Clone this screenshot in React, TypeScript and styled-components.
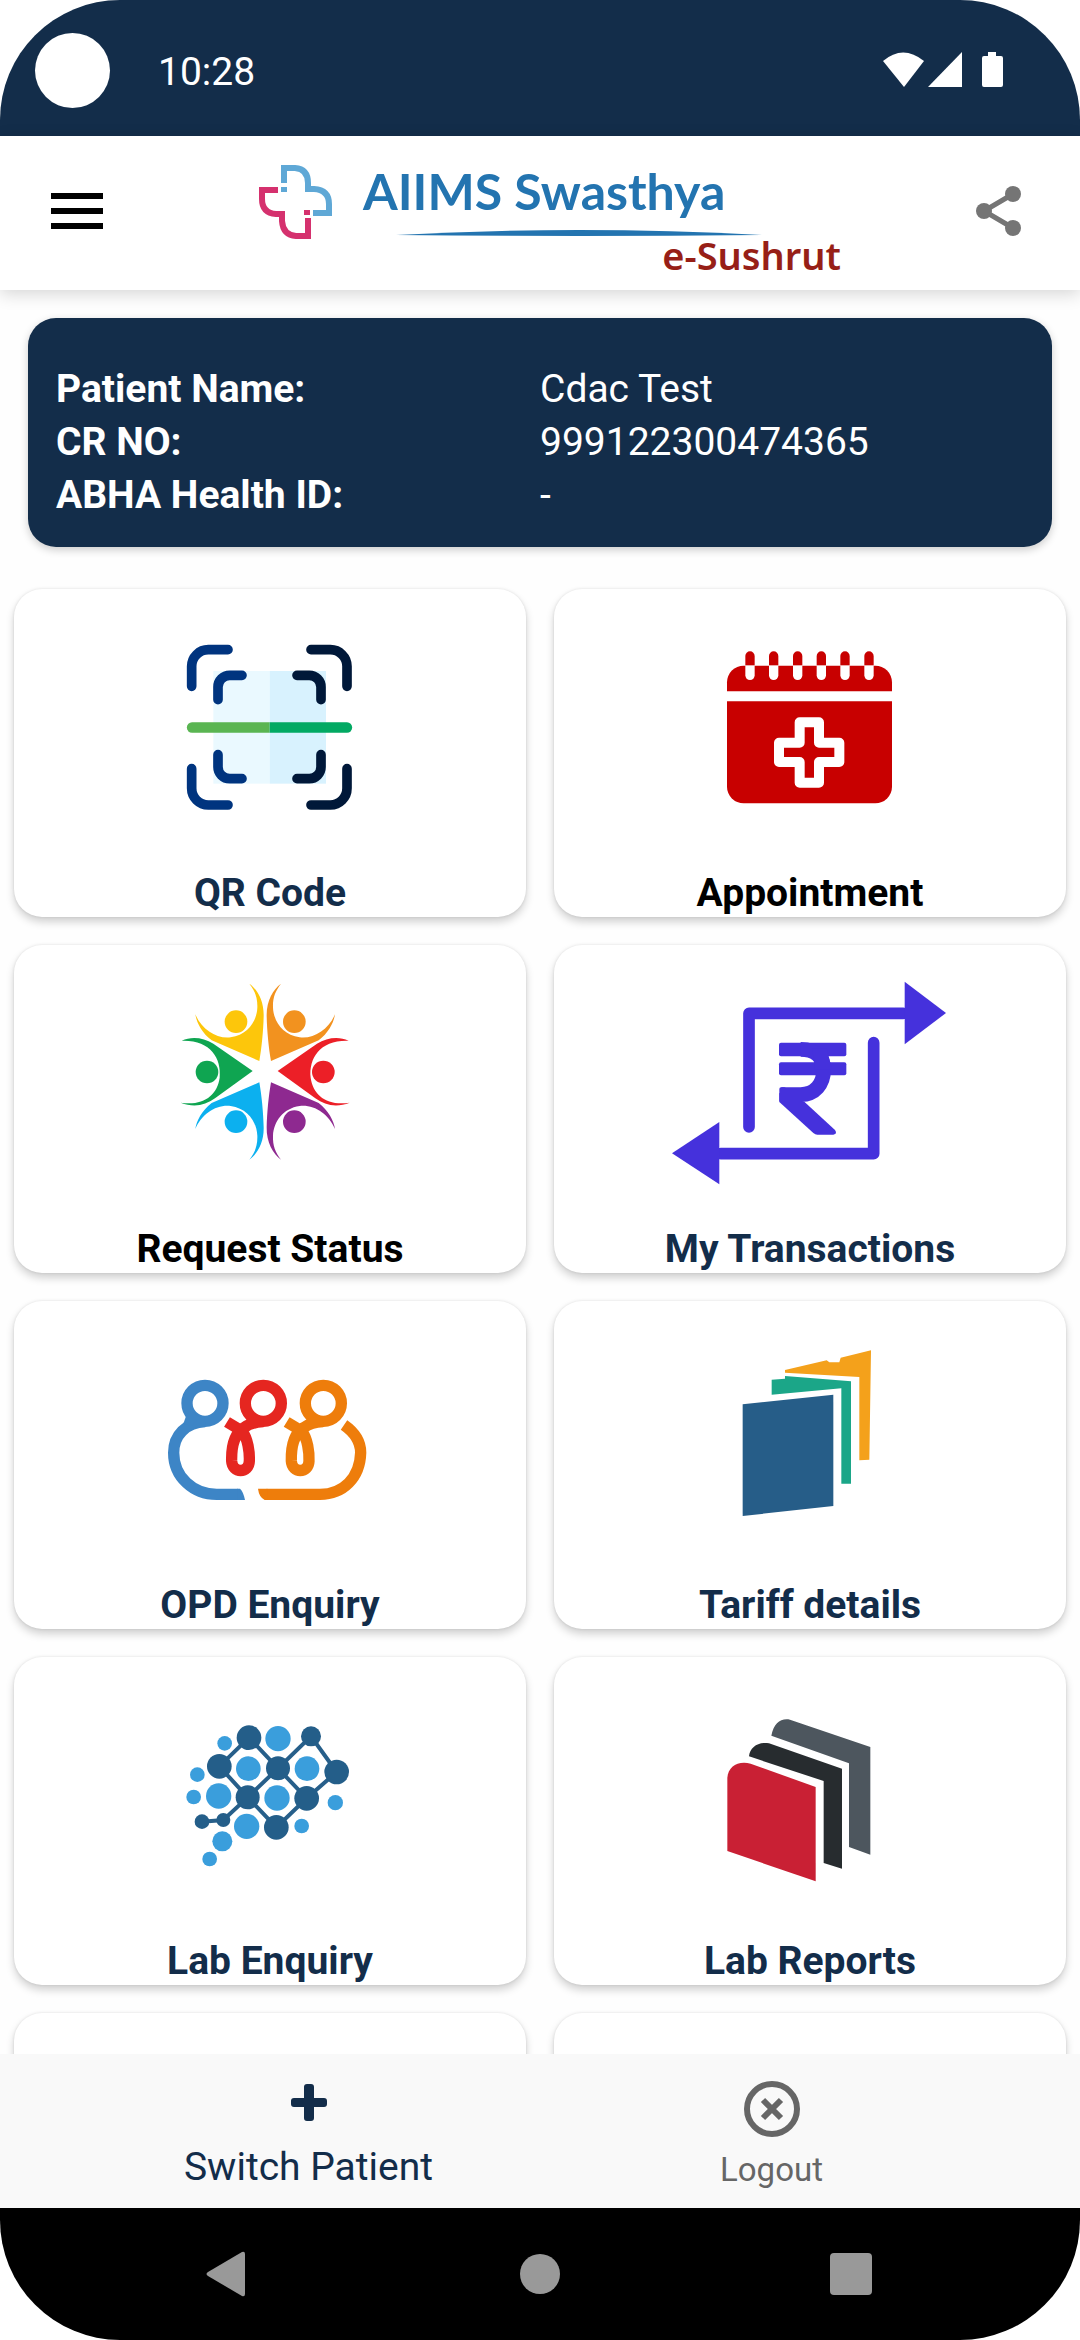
import type { ReactNode } from "react";
import styled, { createGlobalStyle } from "styled-components";

const NAVY = "#132d4a";

const GlobalStyle = createGlobalStyle`
  * {
    box-sizing: border-box;
  }
  body {
    margin: 0;
    background-color: #ffffff;
    font-family: Roboto, sans-serif;
  }
  button {
    padding: 0;
    border: none;
    background: none;
    font-family: inherit;
    cursor: pointer;
  }
  svg {
    display: block;
    flex-shrink: 0;
  }
`;

const Screen = styled.div`
  display: flex;
  flex-direction: column;
  height: 100vh;
  overflow: hidden;
  border-radius: 120px;
  background-color: #fefefe;
`;

const StatusBar = styled.div`
  display: flex;
  align-items: center;
  flex-shrink: 0;
  height: 136px;
  padding: 4px 77px 0 35px;
  background-color: ${NAVY};
  color: #ffffff;
`;

const Camera = styled.div`
  width: 75px;
  height: 75px;
  margin-right: 48px;
  border-radius: 50%;
  background-color: #ffffff;
`;

const Clock = styled.time`
  flex: 1;
  padding-top: 4px;
  font-size: 39px;
  line-height: 46px;
`;

const Header = styled.header`
  position: relative;
  display: flex;
  align-items: center;
  justify-content: space-between;
  flex-shrink: 0;
  height: 154px;
  padding: 0 59px 4px 51px;
  background-color: #ffffff;
  box-shadow: 0 4px 16px rgba(0, 0, 0, 0.16);
`;

const MenuButton = styled.button`
  width: 72px;
`;

const Logo = styled.div`
  display: flex;
  align-items: flex-start;
  gap: 30px;
  padding-top: 16px;
`;

const Wordmark = styled.div`
  display: flex;
  flex-direction: column;
  width: 478px;

  svg {
    margin: 12px 0 0 33px;
  }
`;

const BrandName = styled.span`
  color: #2374b0;
  font-family: Lato, sans-serif;
  font-size: 50px;
  font-weight: 700;
  line-height: 54px;
  white-space: nowrap;
`;

const BrandSub = styled.span`
  align-self: flex-end;
  color: #971f17;
  font-family: "Noto Sans", sans-serif;
  font-size: 38px;
  font-weight: 600;
  line-height: 38px;
`;

const Main = styled.main`
  flex: 1;
  min-height: 0;
  overflow: hidden;
  padding-top: 28px;
`;

const PatientCard = styled.dl`
  display: grid;
  grid-template-columns: 1fr 1fr;
  margin: 0 28px 42px;
  padding: 45px 28px 25px;
  border-radius: 28px;
  background-color: ${NAVY};
  box-shadow: 0 3px 8px rgba(0, 0, 0, 0.2);
  color: #ffffff;
  font-size: 39px;
  line-height: 53px;

  dt {
    font-weight: 700;
  }
  dd {
    margin: 0;
  }
`;

const TileGrid = styled.div`
  display: grid;
  grid-template-columns: 1fr 1fr;
  grid-auto-rows: 328px;
  gap: 28px;
  padding: 0 14px;
`;

const Tile = styled.button<{ $color?: string }>`
  display: flex;
  flex-direction: column;
  align-items: center;
  border-radius: 28px;
  background-color: #ffffff;
  box-shadow:
    0 0 3px rgba(0, 0, 0, 0.1),
    0 5px 9px rgba(0, 0, 0, 0.18);
  color: ${({ $color }) => $color ?? NAVY};
  font-size: 39px;
  font-weight: 700;
  line-height: 48px;
`;

const BottomNav = styled.nav`
  position: relative;
  display: flex;
  flex-shrink: 0;
  height: 154px;
  padding: 0 77px 18px;
  background-color: #f9f9f9;
`;

const NavItem = styled.button<{ $active?: boolean }>`
  display: flex;
  flex: 1;
  flex-direction: column;
  align-items: center;
  justify-content: flex-end;
  gap: 13px;
  color: ${({ $active }) => ($active ? NAVY : "#666666")};
  font-size: ${({ $active }) => ($active ? 39 : 33)}px;
  line-height: ${({ $active }) => ($active ? 46 : 40)}px;
`;

const SystemBar = styled.div`
  display: grid;
  grid-template-columns: repeat(3, 1fr);
  flex-shrink: 0;
  height: 132px;
  padding: 0 73px;
  background-color: #000000;

  button {
    display: flex;
    align-items: center;
    justify-content: center;
  }
`;

// every tile icon is drawn on the same 960x840 board
const TileIcon = ({ x, y, children }: { x: number; y: number; children: ReactNode }) => (
  <svg width="320" height="280" viewBox="0 0 960 840" fill="none" aria-hidden="true">
    <g transform={`translate(${x} ${y})`}>{children}</g>
  </svg>
);

const QrIcon = () => (
  <TileIcon x={150} y={96}>
    <rect x="160" y="150" width="169" height="338" fill="#eaf9ff" />
    <rect x="329" y="150" width="169" height="338" fill="#d8f2fe" />
    <g strokeWidth="29" strokeLinecap="round">
      <g stroke="#00347f">
        <path d="M95 196V136A50 50 0 0 1 145 86H204" />
        <path d="M95 443V502A50 50 0 0 0 145 552H204" />
        <path d="M174 236V198A35 35 0 0 1 209 163H246" />
        <path d="M174 401V438A35 35 0 0 0 209 473H246" />
      </g>
      <g stroke="#001839">
        <path d="M453 86H511A50 50 0 0 1 561 136V196" />
        <path d="M453 552H511A50 50 0 0 0 561 502V443" />
        <path d="M411 163H448A35 35 0 0 1 483 198V236" />
        <path d="M411 473H448A35 35 0 0 0 483 438V401" />
      </g>
    </g>
    <path d="M329 304H96a15 15 0 0 0 0 31H329Z" fill="#5ab552" />
    <path d="M329 304H561a15 15 0 0 1 0 31H329Z" fill="#02a963" />
  </TileIcon>
);

const AppointmentIcon = () => (
  <TileIcon x={150} y={96}>
    <g fill="#c80000">
      <path d="M81 211V184A50 50 0 0 1 131 134H526A50 50 0 0 1 576 184V211Z" />
      <path d="M81 241H576V497A50 50 0 0 1 526 547H131A50 50 0 0 1 81 497Z" />
    </g>
    {[150, 221, 293, 364, 435, 507].map((cx) => (
      <g key={cx}>
        <path d={`M${cx - 14} 133V105a14 14 0 0 1 28 0V133Z`} fill="#c80000" />
        <path d={`M${cx - 14} 134V163a14 14 0 0 0 28 0V134Z`} fill="#ffffff" />
      </g>
    ))}
    <path
      d="M299 304H357V365H418V423H357V485H299V423H237V365H299Z"
      stroke="#ffffff"
      strokeWidth="30"
      strokeLinejoin="round"
    />
  </TileIcon>
);

const figure =
  "M268 68C292 85 312 120 311 165C310 210 305 260 298 300L155 238C125 215 110 185 106 160C125 205 168 234 212 229C262 222 290 182 292 140C293 110 285 90 268 68Z";
const sideFigure =
  "M65 239C95 226 130 230 160 248L278 330L165 412C135 434 100 440 62 425C130 436 172 402 179 350C185 290 150 236 65 239Z";

const RequestIcon = () => (
  <TileIcon x={150} y={48}>
    <g fill="#fdc60b">
      <path d={figure} />
      <circle cx="228" cy="182" r="34" />
    </g>
    <g fill="#f2921f" transform="translate(631 0) scale(-1 1)">
      <path d={figure} />
      <circle cx="228" cy="182" r="34" />
    </g>
    <g fill="#0cb0ef" transform="translate(0 664) scale(1 -1)">
      <path d={figure} />
      <circle cx="228" cy="182" r="34" />
    </g>
    <g fill="#8e2990" transform="translate(631 664) scale(-1 -1)">
      <path d={figure} />
      <circle cx="228" cy="182" r="34" />
    </g>
    <g fill="#0fa551">
      <path d={sideFigure} />
      <circle cx="141" cy="333" r="34" />
    </g>
    <g fill="#ec1f27" transform="translate(631 0) scale(-1 1)">
      <path d={sideFigure} />
      <circle cx="141" cy="333" r="34" />
    </g>
  </TileIcon>
);

const TransactionsIcon = () => (
  <TileIcon x={0} y={48}>
    <g stroke="#4531dc" strokeWidth="35" strokeLinecap="round" strokeLinejoin="round">
      <path d="M297 498V157H760" />
      <path d="M671 245V578H212" />
    </g>
    <g fill="#4531dc">
      <path d="M764 62L888 156L764 250Z" />
      <path d="M208 483L66 577L208 670Z" />
      <rect x="387" y="245" width="202" height="41" rx="6" />
      <rect x="387" y="304" width="202" height="39" rx="6" />
      <path d="M388 396L463 422L555 507Q563 519 550 521H502Q496 521 490 516L388 423Z" />
    </g>
    <path
      d="M394 401H452C495 400 521 370 521 325C521 295 504 265 452 265"
      stroke="#4531dc"
      strokeWidth="44"
    />
    <rect x="388" y="379" width="20" height="44" rx="5" fill="#4531dc" />
    <path d="M486 262H530L546 325H495Z" fill="#4531dc" />
  </TileIcon>
);

const opdLoop =
  "M231 213L276 240C294 262 299 305 298 330C297 368 247 368 245 330C244 290 250 250 282 230C300 216 320 213 340 212";

const OpdIcon = () => (
  <TileIcon x={120} y={150}>
    <g strokeWidth="34">
      <g stroke="#3d85c6">
        <circle cx="165" cy="157" r="54" />
        <path d="M165 212C108 215 71 252 71 305C71 378 130 430 200 430H264" />
      </g>
      <g stroke="#e52620">
        <circle cx="340" cy="157" r="54" />
        <path d={opdLoop} />
      </g>
      <g stroke="#ee7d0b">
        <circle cx="520" cy="157" r="54" />
        <path d={opdLoop} transform="translate(179 0)" />
        <path d="M582 222C615 245 632 275 632 305C630 380 580 430 510 430H350" />
      </g>
    </g>
    <path d="M110 190L125 180L150 200L125 225L100 218Z" fill="#3d85c6" />
    <path d="M262 413H270Q280 422 285 447H262Z" fill="#3d85c6" />
    <path d="M352 413H324Q327 438 344 447H352Z" fill="#ee7d0b" />
  </TileIcon>
);

const TariffIcon = () => (
  <TileIcon x={150} y={90}>
    <path d="M128 220L400 191V525L128 555Z" fill="#265d88" />
    <path d="M215 146L255 143V135L453 151V458H424V172L215 191Z" fill="#1ba688" />
    <path d="M255 117L380 88L388 94H418L422 80L513 58L508 386L478 388V138L255 125Z" fill="#f4a11b" />
  </TileIcon>
);

const darkNodes = [
  [267, 110, 37], [453, 106, 30], [178, 196, 37], [354, 202, 36], [530, 213, 37],
  [263, 289, 36], [440, 292, 37], [349, 379, 37], [126, 362, 22], [190, 357, 21],
];
const lightNodes = [
  [354, 113, 38], [194, 127, 22], [265, 203, 37], [441, 203, 37], [112, 221, 22],
  [101, 288, 22], [176, 285, 38], [351, 291, 38], [526, 305, 23], [260, 376, 38],
  [425, 375, 22], [187, 421, 30], [149, 474, 22],
];

const LabEnquiryIcon = () => (
  <TileIcon x={150} y={132}>
    <path
      d="M178 196L267 110L354 202L453 106L530 213L440 292L349 379L263 289ZM440 292L354 202L263 289L190 357L126 362"
      stroke="#275f8a"
      strokeWidth="12"
    />
    {darkNodes.map(([cx, cy, r]) => (
      <circle key={`${cx}-${cy}`} cx={cx} cy={cy} r={r} fill="#245e89" />
    ))}
    {lightNodes.map(([cx, cy, r]) => (
      <circle key={`${cx}-${cy}`} cx={cx} cy={cy} r={r} fill="#3a9edc" />
    ))}
  </TileIcon>
);

const LabReportsIcon = () => (
  <TileIcon x={150} y={132}>
    <path d="M214 104C222 66 242 51 270 56L511 138V461L447 438V187Z" fill="#4d565e" />
    <path d="M147 166C150 138 175 121 207 127L426 203V503L371 486V240Z" fill="#272c2f" />
    <path d="M82 450V230C84 196 115 178 152 188L347 258V541Z" fill="#c92034" />
  </TileIcon>
);

const tiles = [
  { label: "QR Code", icon: <QrIcon /> },
  { label: "Appointment", icon: <AppointmentIcon />, color: "#000000" },
  { label: "Request Status", icon: <RequestIcon />, color: "#000000" },
  { label: "My Transactions", icon: <TransactionsIcon /> },
  { label: "OPD Enquiry", icon: <OpdIcon /> },
  { label: "Tariff details", icon: <TariffIcon /> },
  { label: "Lab Enquiry", icon: <LabEnquiryIcon /> },
  { label: "Lab Reports", icon: <LabReportsIcon /> },
];

const patient = [
  { label: "Patient Name:", value: "Cdac Test" },
  { label: "CR NO:", value: "999122300474365" },
  { label: "ABHA Health ID:", value: "-" },
];

const AppHeader = () => (
  <Header>
    <MenuButton type="button" aria-label="Menu">
      <svg width="52" height="36" viewBox="0 0 52 36">
        <path d="M0 0H52V6H0ZM0 15H52V21H0ZM0 30H52V36H0Z" fill="#000000" />
      </svg>
    </MenuButton>
    <Logo>
      <svg width="75" height="75" viewBox="18 15 75 75" fill="none" strokeWidth="6" aria-hidden="true">
        <path d="M44 34V19H55Q68 20 68 34V40H74Q89 41 89 55V64H73" stroke="#5fa8d6" />
        <path d="M41 38H47V43H41Z" fill="#5fa8d6" />
        <path d="M38 41H22V50Q22 64 36 65H42V72Q43 86 56 87H68V69" stroke="#d5316e" />
        <path d="M64 61H70V66H64Z" fill="#d5316e" />
      </svg>
      <Wordmark>
        <BrandName>AIIMS Swasthya</BrandName>
        <svg width="366" height="6" viewBox="0 0 366 6" aria-hidden="true">
          <path d="M0 5Q183 -5 366 5Q183 7 0 5Z" fill="#2374b0" />
        </svg>
        <BrandSub>e-Sushrut</BrandSub>
      </Wordmark>
    </Logo>
    <button type="button" aria-label="Share">
      <svg width="45" height="50" viewBox="0 0 45 50" fill="#757575">
        <path d="M37 8L8 25L37 42" fill="none" stroke="#757575" strokeWidth="5" />
        <circle cx="37" cy="8" r="8" />
        <circle cx="8" cy="25" r="8" />
        <circle cx="37" cy="42" r="8" />
      </svg>
    </button>
  </Header>
);

export default function App() {
  return (
    <>
      <GlobalStyle />
      <Screen>
        <StatusBar>
          <Camera />
          <Clock>10:28</Clock>
          <svg width="120" height="36" viewBox="0 0 120 36" fill="#ffffff" aria-hidden="true">
            <path d="M0 9Q20 -8 41 9L21 35Z" />
            <path d="M79 0V35H45Z" />
            <path d="M105 0H113V4H118Q120 4 120 6V33Q120 35 118 35H101Q99 35 99 33V6Q99 4 101 4H105Z" />
          </svg>
        </StatusBar>
        <AppHeader />
        <Main>
          <PatientCard>
            {patient.map(({ label, value }) => [
              <dt key={label}>{label}</dt>,
              <dd key={value}>{value}</dd>,
            ])}
          </PatientCard>
          <TileGrid>
            {tiles.map(({ label, icon, color }) => (
              <Tile key={label} type="button" $color={color}>
                {icon}
                {label}
              </Tile>
            ))}
            {/* next row, cut off by the bottom nav */}
            <Tile as="div" />
            <Tile as="div" />
          </TileGrid>
        </Main>
        <BottomNav>
          <NavItem type="button" $active>
            <svg width="56" height="56" viewBox="0 0 56 56" aria-hidden="true">
              <path
                d="M26 9H30Q33 9 33 12V23H43Q46 23 46 26V29Q46 32 43 32H33V43Q33 46 30 46H26Q23 46 23 43V32H13Q10 32 10 29V26Q10 23 13 23H23V12Q23 9 26 9Z"
                fill={NAVY}
              />
            </svg>
            Switch Patient
          </NavItem>
          <NavItem type="button">
            <svg width="56" height="56" viewBox="0 0 56 56" fill="none" stroke="#666666" aria-hidden="true">
              <circle cx="28" cy="28" r="25" strokeWidth="6" />
              <path d="M19 19L37 37M37 19L19 37" strokeWidth="6" />
            </svg>
            Logout
          </NavItem>
        </BottomNav>
        <SystemBar>
          <button type="button" aria-label="Back">
            <svg width="46" height="46" viewBox="0 0 46 46">
              <path d="M36 1Q39 0 39 3V43Q39 46 36 45L2 25Q-1 23 2 21Z" fill="#999999" />
            </svg>
          </button>
          <button type="button" aria-label="Home">
            <svg width="40" height="40" viewBox="0 0 40 40">
              <circle cx="20" cy="20" r="20" fill="#999999" />
            </svg>
          </button>
          <button type="button" aria-label="Recent apps">
            <svg width="42" height="42" viewBox="0 0 42 42">
              <rect width="42" height="42" rx="4" fill="#999999" />
            </svg>
          </button>
        </SystemBar>
      </Screen>
    </>
  );
}
